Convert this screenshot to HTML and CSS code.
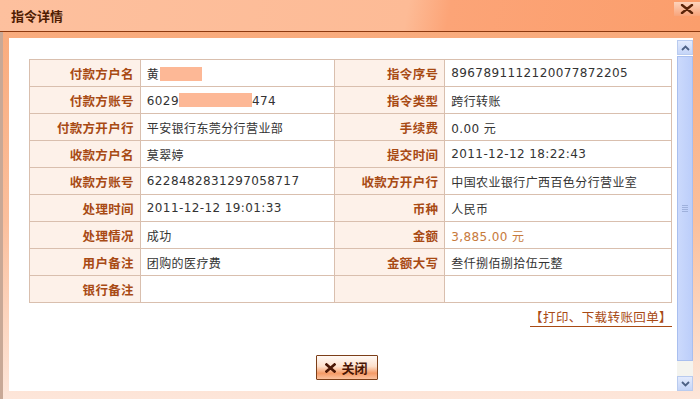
FILE: index.html
```html
<!DOCTYPE html>
<html lang="zh-CN">
<head>
<meta charset="UTF-8" />
<title>指令详情</title>
<link rel="stylesheet" href="styles.css">
</head>
<body>
  <div class="dialog">
    <div class="titlebar">
      <span class="title">指令详情</span>
      <span class="close-x">
        <svg width="14" height="10" viewBox="0 0 14 10"><path d="M2 1 L12 9 M12 1 L2 9" stroke="#5a2408" stroke-width="2.4" stroke-linecap="round"/></svg>
      </span>
    </div>

    <div class="panel">
      <div class="content">
        <table class="detail">
          <tr>
            <th>付款方户名</th>
            <td>黄<span class="mask mask-name"></span></td>
            <th>指令序号</th>
            <td>8967891112120077872205</td>
          </tr>
          <tr>
            <th>付款方账号</th>
            <td>6029<span class="mask mask-acct"></span>474</td>
            <th>指令类型</th>
            <td>跨行转账</td>
          </tr>
          <tr>
            <th>付款方开户行</th>
            <td>平安银行东莞分行营业部</td>
            <th>手续费</th>
            <td>0.00 元</td>
          </tr>
          <tr>
            <th>收款方户名</th>
            <td>莫翠婷</td>
            <th>提交时间</th>
            <td>2011-12-12 18:22:43</td>
          </tr>
          <tr>
            <th>收款方账号</th>
            <td>6228482831297058717</td>
            <th>收款方开户行</th>
            <td>中国农业银行广西百色分行营业室</td>
          </tr>
          <tr>
            <th>处理时间</th>
            <td>2011-12-12 19:01:33</td>
            <th>币种</th>
            <td>人民币</td>
          </tr>
          <tr>
            <th>处理情况</th>
            <td>成功</td>
            <th>金额</th>
            <td class="amount">3,885.00 元</td>
          </tr>
          <tr>
            <th>用户备注</th>
            <td>团购的医疗费</td>
            <th>金额大写</th>
            <td>叁仟捌佰捌拾伍元整</td>
          </tr>
          <tr>
            <th>银行备注</th>
            <td></td>
            <th></th>
            <td></td>
          </tr>
        </table>

        <div class="links">
          <a href="#" class="print-link">【打印、下载转账回单】</a>
        </div>

        <div class="actions">
          <button class="btn-close">
            <svg width="11" height="10" viewBox="0 0 11 10"><path d="M1.5 1.5 L9.5 8.5 M9.5 1.5 L1.5 8.5" stroke="#4a1604" stroke-width="2.6" stroke-linecap="square"/></svg>
            关闭
          </button>
        </div>
      </div>

      <div class="scrollbar">
        <div class="sb-btn">
          <svg width="9" height="6" viewBox="0 0 9 6"><path d="M1 5 L4.5 1.5 L8 5" fill="none" stroke="#4d6185" stroke-width="1.8"/></svg>
        </div>
        <div class="sb-thumb"><span class="grip"></span></div>
        <div class="sb-track"></div>
        <div class="sb-btn">
          <svg width="9" height="6" viewBox="0 0 9 6"><path d="M1 1 L4.5 4.5 L8 1" fill="none" stroke="#4d6185" stroke-width="1.8"/></svg>
        </div>
      </div>
    </div>
  </div>
</body>
</html>
```

FILE: styles.css
```css
html, body {
  margin: 0;
  padding: 0;
  width: 700px;
  height: 399px;
  overflow: hidden;
}

body {
  font-family: "DejaVu Sans", "Noto Sans CJK SC", sans-serif;
  font-size: 12px;
  color: #333;
}

.dialog {
  height: 399px;
  display: flex;
  flex-direction: column;
  background: linear-gradient(to bottom, #f9a878 0%, #fbbf9c 55%, #fde6da 100%);
  border-left: 3px solid #c8a896;
  box-sizing: border-box;
}

/* 标题栏 */
.titlebar {
  height: 31px;
  flex: none;
  display: flex;
  align-items: center;
  justify-content: space-between;
  padding-left: 8px;
  margin-left: -3px;
  background: linear-gradient(100deg, #fdc09e 0%, #fdbb96 58%, #fca477 64%, #fb9e6c 100%);
  border-bottom: 1px solid #8e3a10;
}

.title {
  font-family: "Noto Sans CJK SC", sans-serif;
  font-weight: bold;
  font-size: 13px;
  color: #4e1c02;
  padding-left: 3px;
}

.close-x {
  align-self: flex-start;
  margin-top: 2px;
  width: 26px;
  height: 14px;
  display: flex;
  align-items: center;
  justify-content: center;
  background: linear-gradient(to bottom, #fdd3bb, #f8a47a);
}

/* 内容区域 */
.panel {
  flex: 1;
  display: flex;
  margin: 6px 7px 8px 6px;
  background: #fff;
}

.content {
  flex: 1;
  padding: 21px 4px 0 20px;
}

table.detail {
  width: 643px;
  border-collapse: collapse;
}

.detail th,
.detail td {
  border: 1px solid #d9bfae;
  height: 26px;
  padding: 0 6px;
  white-space: nowrap;
}

.detail th {
  width: 98px;
  text-align: right;
  background: #fdf1e9;
  color: #a84a14;
  font-family: "Noto Sans CJK SC", sans-serif;
  font-size: 12.5px;
  font-weight: bold;
  letter-spacing: 0.3px;
}

.detail th:nth-child(3) {
  width: 97px;
}

.detail td {
  width: 182px;
  text-align: left;
  letter-spacing: 0.4px;
}

.detail td:last-child {
  width: 214px;
}

.detail .amount {
  color: #c77a3c;
}

.mask {
  display: inline-block;
  height: 14px;
  background: #fdb896;
  vertical-align: -2px;
}

.mask-name {
  width: 42px;
  margin-left: 1px;
}

.mask-acct {
  width: 73px;
}

.links {
  width: 643px;
  text-align: right;
  margin-top: 4px;
}

.print-link {
  color: #a84a14;
  font-family: "Noto Sans CJK SC", sans-serif;
  font-size: 12.5px;
  text-decoration: none;
  border-bottom: 1px solid #a84a14;
  letter-spacing: 0.4px;
}

.actions {
  width: 643px;
  display: flex;
  justify-content: center;
  margin-top: 29px;
  padding-right: 8px;
  box-sizing: border-box;
}

.btn-close {
  width: 62px;
  height: 25px;
  border: 1px solid #7c3e18;
  border-radius: 1px;
  background: linear-gradient(to bottom, #fffaf6 0%, #fde0cc 45%, #f59a66 75%, #fbc29f 100%);
  font-family: "Noto Sans CJK SC", sans-serif;
  font-size: 13px;
  font-weight: bold;
  color: #4a1604;
  display: flex;
  align-items: center;
  justify-content: center;
  gap: 5px;
  padding: 0;
  cursor: pointer;
}

/* 滚动条 */
.scrollbar {
  width: 16px;
  flex: none;
  margin: 2px 0 0 0;
  display: flex;
  flex-direction: column;
}

.sb-btn {
  height: 15px;
  flex: none;
  display: flex;
  align-items: center;
  justify-content: center;
  background: linear-gradient(to bottom, #e3ebfd, #c5d5f8);
  border: 1px solid #b9cbef;
  box-sizing: border-box;
}

.sb-thumb {
  height: 305px;
  flex: none;
  margin-top: 1px;
  background: linear-gradient(to right, #cbd9fc, #bccefa);
  border: 1px solid #a9bfef;
  box-sizing: border-box;
  display: flex;
  align-items: center;
  justify-content: center;
}

.grip {
  width: 6px;
  height: 7px;
  background: repeating-linear-gradient(to bottom, #9fb1dc 0 1px, transparent 1px 2px);
}

.sb-track {
  flex: 1;
  background: #f4f4ef;
}
```
